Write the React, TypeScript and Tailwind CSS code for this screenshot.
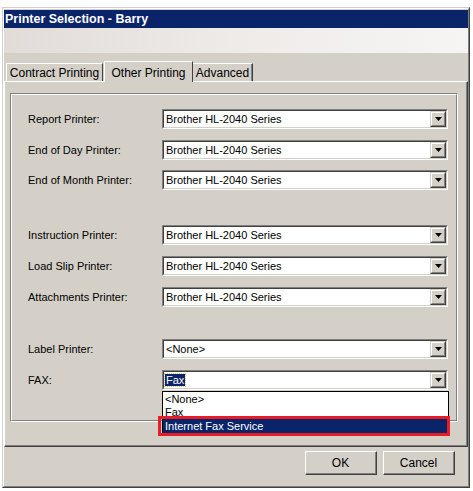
import React from 'react';

const font = "font-['Liberation_Sans',Arial,sans-serif]";

function Arrow() {
  return (
    <div className="w-[16px] h-[16px] bg-[#d4d0c8] border-t border-l border-t-[#d4d0c8] border-l-[#d4d0c8] border-r border-b border-r-[#404040] border-b-[#404040] flex">
      <div className="flex-1 border-t border-l border-t-white border-l-white border-r border-b border-r-[#808080] border-b-[#808080] flex items-center justify-center">
        <svg width="7" height="4" viewBox="0 0 7 4">
          <path d="M0 0h7L3.5 4z" fill="#000" />
        </svg>
      </div>
    </div>
  );
}

function Combo({ value, selected }: { value: string; selected?: boolean }) {
  return (
    <div className="w-[286px] h-[20px] border-t border-l border-t-[#808080] border-l-[#808080] border-r border-b border-r-white border-b-white">
      <div className="h-full border-t border-l border-t-[#404040] border-l-[#404040] border-r border-b border-r-[#d4d0c8] border-b-[#d4d0c8] bg-white flex items-center">
        <div className="flex-1 pl-[1px] text-[11px] leading-[13px] text-black">
          {selected ? (
            <span className="bg-[#0a246a] text-white px-[1px] outline-1 outline-dotted outline-[#e5d47a]">{value}</span>
          ) : (
            <span className="px-[1px]">{value}</span>
          )}
        </div>
        <Arrow />
      </div>
    </div>
  );
}

function Row({ label, value, mt, selected }: { label: string; value: string; mt: string; selected?: boolean }) {
  return (
    <div className={`flex items-center h-[20px] ${mt}`}>
      <div className="w-[134px] text-[11px] text-black">{label}</div>
      <Combo value={value} selected={selected} />
    </div>
  );
}

function Button({ children }: { children: React.ReactNode }) {
  return (
    <div className="w-[72px] h-[24px] border-t border-l border-t-white border-l-white border-r border-b border-r-[#404040] border-b-[#404040]">
      <div className="h-full border-r border-b border-r-[#808080] border-b-[#808080] flex items-center justify-center text-[12px] text-black">
        {children}
      </div>
    </div>
  );
}

export default function App() {
  const brother = 'Brother HL-2040 Series';
  return (
    <div className={`relative w-[473px] h-[491px] bg-white overflow-hidden ${font}`}>
      {/* Window */}
      <div className="absolute left-[2px] top-[7px] w-[468px] h-[481px] bg-[#d4d0c8] border border-t-[#d4d0c8] border-l-[#d4d0c8] border-r-[#404040] border-b-[#404040]">
        <div className="h-full border border-t-white border-l-white border-r-[#808080] border-b-[#808080] pt-[1px] flex flex-col">
          {/* Title bar */}
          <div className="h-[18px] bg-[#0a246a] text-white font-bold text-[12.5px] leading-[18px] pl-[1px]">
            Printer Selection - Barry
          </div>
          {/* Band */}
          <div className="h-[25px] bg-gradient-to-r from-[#e1dcd8] via-[#eeebe9] to-[#f7f5f4]" />

          {/* Tabs */}
          <div className="h-[28px] pl-[1px] flex items-end">
            <div className="w-[97px] h-[18px] ml-[1px] bg-[#d4d0c8] border-t border-l border-t-white border-l-white border-r border-r-[#404040] flex items-center justify-center text-[12px] text-black">
              Contract Printing
            </div>
            <div className="w-[89px] h-[21px] ml-[1px] -mb-[1px] relative z-10 bg-[#d4d0c8] border-t border-l border-t-white border-l-white border-r border-r-[#404040] flex items-start pt-[2px] justify-center text-[12px] text-black">
              Other Printing
            </div>
            <div className="w-[60px] h-[18px] bg-[#d4d0c8] border-r border-t border-t-white border-r-[#404040] shadow-[inset_-1px_0_0_#808080] flex items-center justify-center text-[12px] text-black">
              Advanced
            </div>
          </div>

          {/* Panel */}
          <div className="h-[366px] w-[464px] border-t border-l border-t-white border-l-white border-r border-b border-r-[#404040] border-b-[#404040]">
            <div className="h-full border-r border-b border-r-[#808080] border-b-[#808080] pt-[11px] pl-[5px]">
              {/* Group box */}
              <div className="w-[448px] h-[329px] border-t border-l border-t-[#808080] border-l-[#808080] border-r border-b border-r-white border-b-white">
                <div className="h-full border-t border-l border-t-white border-l-white border-r border-b border-r-[#808080] border-b-[#808080] pt-[14px] pl-[16px]">
                  <Row label="Report Printer:" value={brother} mt="mt-0" />
                  <Row label="End of Day Printer:" value={brother} mt="mt-[11px]" />
                  <Row label="End of Month Printer:" value={brother} mt="mt-[10px]" />
                  <Row label="Instruction Printer:" value={brother} mt="mt-[35px]" />
                  <Row label="Load Slip Printer:" value={brother} mt="mt-[11px]" />
                  <Row label="Attachments Printer:" value={brother} mt="mt-[11px]" />
                  <Row label="Label Printer:" value="<None>" mt="mt-[32px]" />
                  <Row label="FAX:" value="Fax" mt="mt-[11px]" selected />
                </div>
              </div>
            </div>
          </div>

          {/* Buttons */}
          <div className="flex justify-end gap-[6px] pr-[13px] pt-[4px]">
            <Button>OK</Button>
            <Button>Cancel</Button>
          </div>
        </div>
      </div>

      {/* Open dropdown list */}
      <div className="absolute left-[162px] top-[391px] w-[287px] h-[44px] bg-white border border-black pt-[1px] text-[11px] leading-[13px] text-black">
        <div className="pl-[2px] h-[13px]">&lt;None&gt;</div>
        <div className="pl-[2px] h-[13px]">Fax</div>
        <div className="pl-[2px] h-[14px] bg-[#0a246a] text-white leading-[14px]">Internet Fax Service</div>
      </div>
      {/* Red highlight */}
      <div className="absolute left-[158px] top-[416px] w-[292px] h-[20px] border-[3px] border-[#e81c24]" />
    </div>
  );
}
